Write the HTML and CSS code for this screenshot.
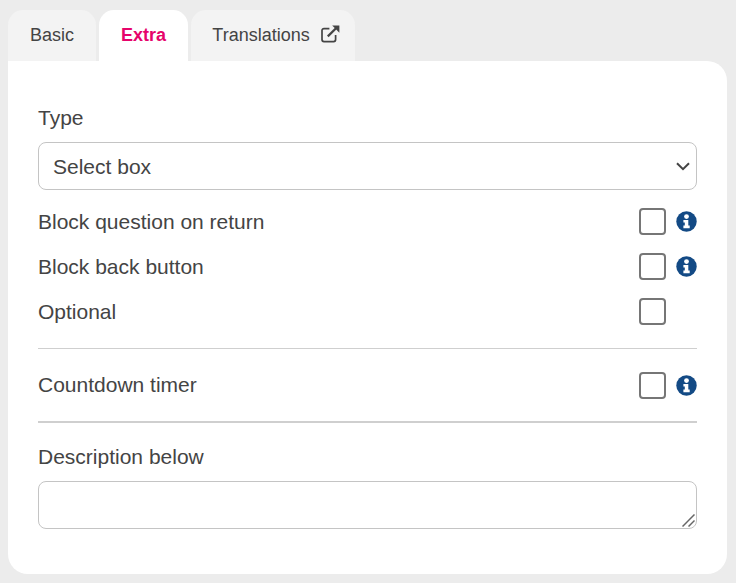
FILE: index.html
```html
<!DOCTYPE html>
<html lang="en">
<head>
    <meta charset="UTF-8">
    <title>Question settings</title>
    <link rel="stylesheet" href="styles.css">
</head>
<body>
    <div class="tabs">
        <div class="tab">Basic</div>
        <div class="tab active">Extra</div>
        <div class="tab tab-link">Translations
            <svg class="ext-icon" width="19" height="18" viewBox="0 0 19 18" fill="none" stroke="#444" stroke-width="1.7">
                <path d="M14.6 10v4.6a2 2 0 0 1-2 2H3a2 2 0 0 1-2-2V5.6a2 2 0 0 1 2-2h5.4"/>
                <path d="M6.8 11.4 16 2.2" stroke-width="2.2"/>
                <path d="M11.2 0.6h7.2v7.2z" fill="#444" stroke="none"/>
            </svg>
        </div>
    </div>

    <div class="panel">
        <label class="field-label">Type</label>
        <div class="select-wrap">
            <select class="select">
                <option>Select box</option>
            </select>
            <svg class="chevron" width="14" height="9" viewBox="0 0 14 9" fill="none" stroke="#444" stroke-width="2">
                <path d="M1 1.2 7 7.2 13 1.2"/>
            </svg>
        </div>

        <div class="rows">
            <div class="row">
                <span class="row-label">Block question on return</span>
                <input type="checkbox" class="check">
                <svg class="info" width="21" height="21" viewBox="0 0 21 21">
                    <circle cx="10.5" cy="10.5" r="10.2" fill="#134a85"/>
                    <circle cx="10.5" cy="5.6" r="2.4" fill="#fff"/>
                    <path d="M7.4 9h4.9v5.6h1.4v2.7H7.4v-2.7h1.4v-3H7.4z" fill="#fff"/>
                </svg>
            </div>
            <div class="row">
                <span class="row-label">Block back button</span>
                <input type="checkbox" class="check">
                <svg class="info" width="21" height="21" viewBox="0 0 21 21">
                    <circle cx="10.5" cy="10.5" r="10.2" fill="#134a85"/>
                    <circle cx="10.5" cy="5.6" r="2.4" fill="#fff"/>
                    <path d="M7.4 9h4.9v5.6h1.4v2.7H7.4v-2.7h1.4v-3H7.4z" fill="#fff"/>
                </svg>
            </div>
            <div class="row">
                <span class="row-label">Optional</span>
                <input type="checkbox" class="check">
                <span class="info-space"></span>
            </div>
        </div>

        <hr class="divider first">

        <div class="row row-timer">
            <span class="row-label">Countdown timer</span>
            <input type="checkbox" class="check">
            <svg class="info" width="21" height="21" viewBox="0 0 21 21">
                <circle cx="10.5" cy="10.5" r="10.2" fill="#134a85"/>
                <circle cx="10.5" cy="5.6" r="2.4" fill="#fff"/>
                <path d="M7.4 9h4.9v5.6h1.4v2.7H7.4v-2.7h1.4v-3H7.4z" fill="#fff"/>
            </svg>
        </div>

        <hr class="divider second">

        <label class="field-label">Description below</label>
        <div class="textarea-wrap">
            <textarea class="textarea"></textarea>
            <svg class="grip" width="13" height="13" viewBox="0 0 13 13" fill="none" stroke="#666" stroke-width="1.5">
                <path d="M0.5 12.5 12.5 0.5"/>
                <path d="M6.5 12.5 12.5 6.5"/>
            </svg>
        </div>
    </div>
</body>
</html>
```

FILE: styles.css
```css
* {
    box-sizing: border-box;
}

body {
    margin: 0;
    padding: 10px 9px 9px 8px;
    background-color: #ececec;
    font-family: "Liberation Sans", Arial, sans-serif;
    color: #444;
}

.tabs {
    display: flex;
    gap: 3px;
    height: 51px;
}

.tab {
    display: flex;
    align-items: center;
    justify-content: center;
    width: 88px;
    padding-bottom: 1px;
    background: #f3f3f3;
    border-radius: 15px 15px 0 0;
    font-size: 18px;
}

.tab.active {
    width: 89px;
    background: #fff;
    color: #e6046b;
    font-weight: bold;
}

.tab-link {
    width: 164px;
    gap: 11px;
    padding-left: 6px;
}

.ext-icon {
    margin-top: -3px;
}

.panel {
    height: 513px;
    padding: 44px 30px 0;
    background: #fff;
    border-radius: 0 20px 20px 20px;
}

.field-label {
    display: block;
    height: 26px;
    font-size: 21px;
    line-height: 26px;
}

.select-wrap {
    position: relative;
    margin-top: 11px;
}

.select {
    display: block;
    width: 100%;
    height: 48px;
    padding: 1px 14px 0;
    border: 1px solid #c4c4c4;
    border-radius: 8px;
    background: #fff;
    appearance: none;
    font-family: inherit;
    font-size: 21px;
    color: #444;
}

.chevron {
    position: absolute;
    top: 20px;
    right: 7px;
}

.rows {
    margin-top: 10px;
}

.row {
    display: flex;
    align-items: center;
    height: 45px;
}

.row-label {
    flex: 1;
    padding-bottom: 2px;
    font-size: 21px;
}

.check {
    width: 27px;
    height: 27px;
    margin: 0 10px 2px 0;
    border: 2px solid #767676;
    border-radius: 4px;
    background: #fff;
    appearance: none;
}

.info {
    display: block;
    margin-bottom: 2px;
}

.row-timer .check,
.row-timer .info {
    margin-bottom: 0;
}

.info-space {
    width: 21px;
}

.divider {
    height: 1px;
    margin: 0;
    border: none;
    background: #cfcfcf;
}

.divider.first {
    margin-top: 13px;
    margin-bottom: 14px;
}

.divider.second {
    margin-top: 13px;
    margin-bottom: 21px;
    height: 2px;
}

.textarea-wrap {
    position: relative;
    margin-top: 11px;
}

.textarea {
    display: block;
    width: 100%;
    height: 48px;
    border: 1px solid #c4c4c4;
    border-radius: 8px;
    background: #fff;
    resize: none;
}

.grip {
    position: absolute;
    right: 2px;
    bottom: 2px;
}
```
